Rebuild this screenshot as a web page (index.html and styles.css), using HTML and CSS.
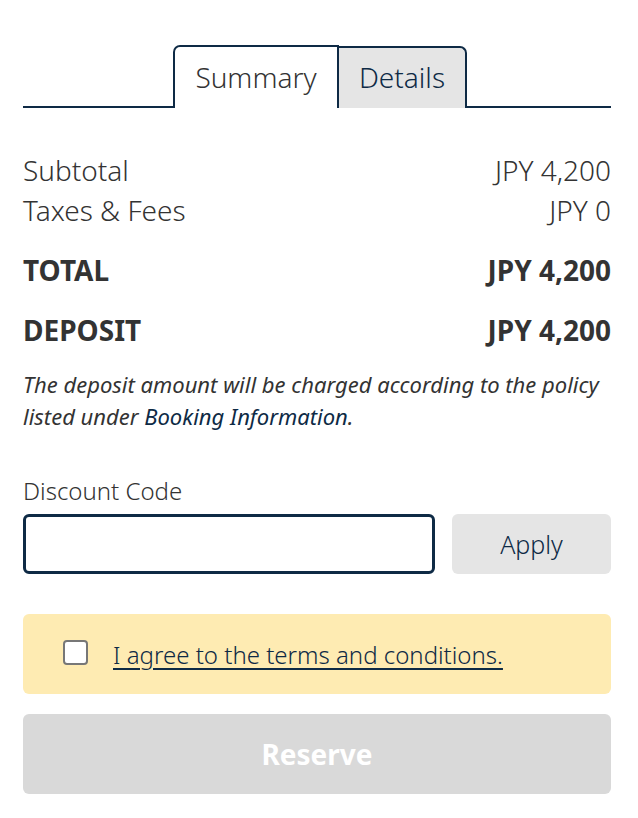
FILE: index.html
```html
<!DOCTYPE html>
<html lang="en">
<head>
<meta charset="utf-8">
<title>Summary</title>
<link rel="stylesheet" href="styles.css">
</head>
<body>
<div class="panel">
  <div class="tabs">
    <div class="tab tab-active">Summary</div>
    <div class="tab tab-inactive">Details</div>
  </div>

  <div class="rows">
    <div class="row"><span>Subtotal</span><span>JPY 4,200</span></div>
    <div class="row"><span>Taxes &amp; Fees</span><span>JPY 0</span></div>
    <div class="row row-bold row-total"><span>TOTAL</span><span>JPY 4,200</span></div>
    <div class="row row-bold row-deposit"><span>DEPOSIT</span><span>JPY 4,200</span></div>
  </div>

  <p class="note">The deposit amount will be charged according to the policy listed under <span class="note-link">Booking Information</span>.</p>

  <div class="discount">
    <label class="discount-label" for="code">Discount Code</label>
    <div class="discount-row">
      <input class="discount-input" id="code" type="text">
      <button class="apply-btn" type="button">Apply</button>
    </div>
  </div>

  <div class="agree">
    <span class="checkbox"></span>
    <span class="agree-text">I agree to the terms and conditions.</span>
  </div>

  <button class="reserve-btn" type="button">Reserve</button>
</div>
</body>
</html>
```

FILE: styles.css
```css
* { box-sizing: border-box; }

body {
  margin: 0;
  background: #ffffff;
  font-family: "Noto Sans", "Open Sans", sans-serif;
  color: #333333;
}

.panel {
  padding: 45px 27px 0 23px;
}

.tabs {
  display: flex;
  justify-content: center;
  border-bottom: 2px solid #0e2a45;
  height: 63px;
  padding-left: 6px;
}

.tab {
  font-size: 28px;
  font-weight: 300;
  line-height: 60px;
  margin-bottom: -2px;
  border-top-left-radius: 7px;
  border-top-right-radius: 7px;
}

.tab-active {
  background: #ffffff;
  border: 2px solid #0e2a45;
  border-bottom: none;
  color: #333333;
  width: 166px;
  text-align: center;
  border-top-right-radius: 0;
}

.tab-inactive {
  background: #e5e5e5;
  border: 2px solid #0e2a45;
  border-left: none;
  border-bottom: none;
  margin-top: 1px;
  height: 62px;
  line-height: 58px;
  color: #0e2a45;
  width: 128px;
  text-align: center;
  border-top-left-radius: 0;
}

.rows {
  margin-top: 42px;
}

.row {
  display: flex;
  justify-content: space-between;
  font-size: 28px;
  font-weight: 300;
  line-height: 40px;
}

.row-bold {
  font-weight: 700;
  margin-top: 20px;
}

.note {
  margin: 18px 0 0;
  font-size: 22px;
  font-style: italic;
  font-weight: 400;
  line-height: 32px;
  color: #333333;
}

.note-link {
  color: #0e2a45;
}

.discount {
  margin-top: 44px;
}

.discount-label {
  display: block;
  font-size: 24px;
  font-weight: 300;
  line-height: 30px;
}

.discount-row {
  display: flex;
  gap: 17px;
  margin-top: 8px;
}

.discount-input {
  flex: 1;
  height: 60px;
  border: 3px solid #0e2a45;
  border-radius: 6px;
  background: #fff;
  font-size: 22px;
  padding: 0 12px;
  outline: none;
}

.apply-btn {
  width: 159px;
  height: 60px;
  border: none;
  border-radius: 6px;
  background: #e5e5e5;
  color: #0e2a45;
  font-family: "Noto Sans", sans-serif;
  font-size: 25px;
  font-weight: 300;
}

.agree {
  margin-top: 40px;
  height: 80px;
  background: #feebb2;
  border-radius: 6px;
  display: flex;
  align-items: center;
  padding-left: 40px;
}

.checkbox {
  width: 25px;
  height: 25px;
  border: 2px solid #777777;
  border-radius: 4px;
  background: #ffffff;
  margin-top: -4px;
}

.agree-text {
  margin-left: 25px;
  font-size: 24px;
  font-weight: 300;
  color: #0e2a45;
  text-decoration: underline;
  text-underline-offset: 4px;
  text-decoration-thickness: 2px;
}

.reserve-btn {
  display: block;
  width: 100%;
  margin-top: 20px;
  height: 80px;
  border: none;
  border-radius: 6px;
  background: #d9d9d9;
  color: #ffffff;
  font-family: "Noto Sans", sans-serif;
  font-size: 28px;
  font-weight: 700;
}
```
